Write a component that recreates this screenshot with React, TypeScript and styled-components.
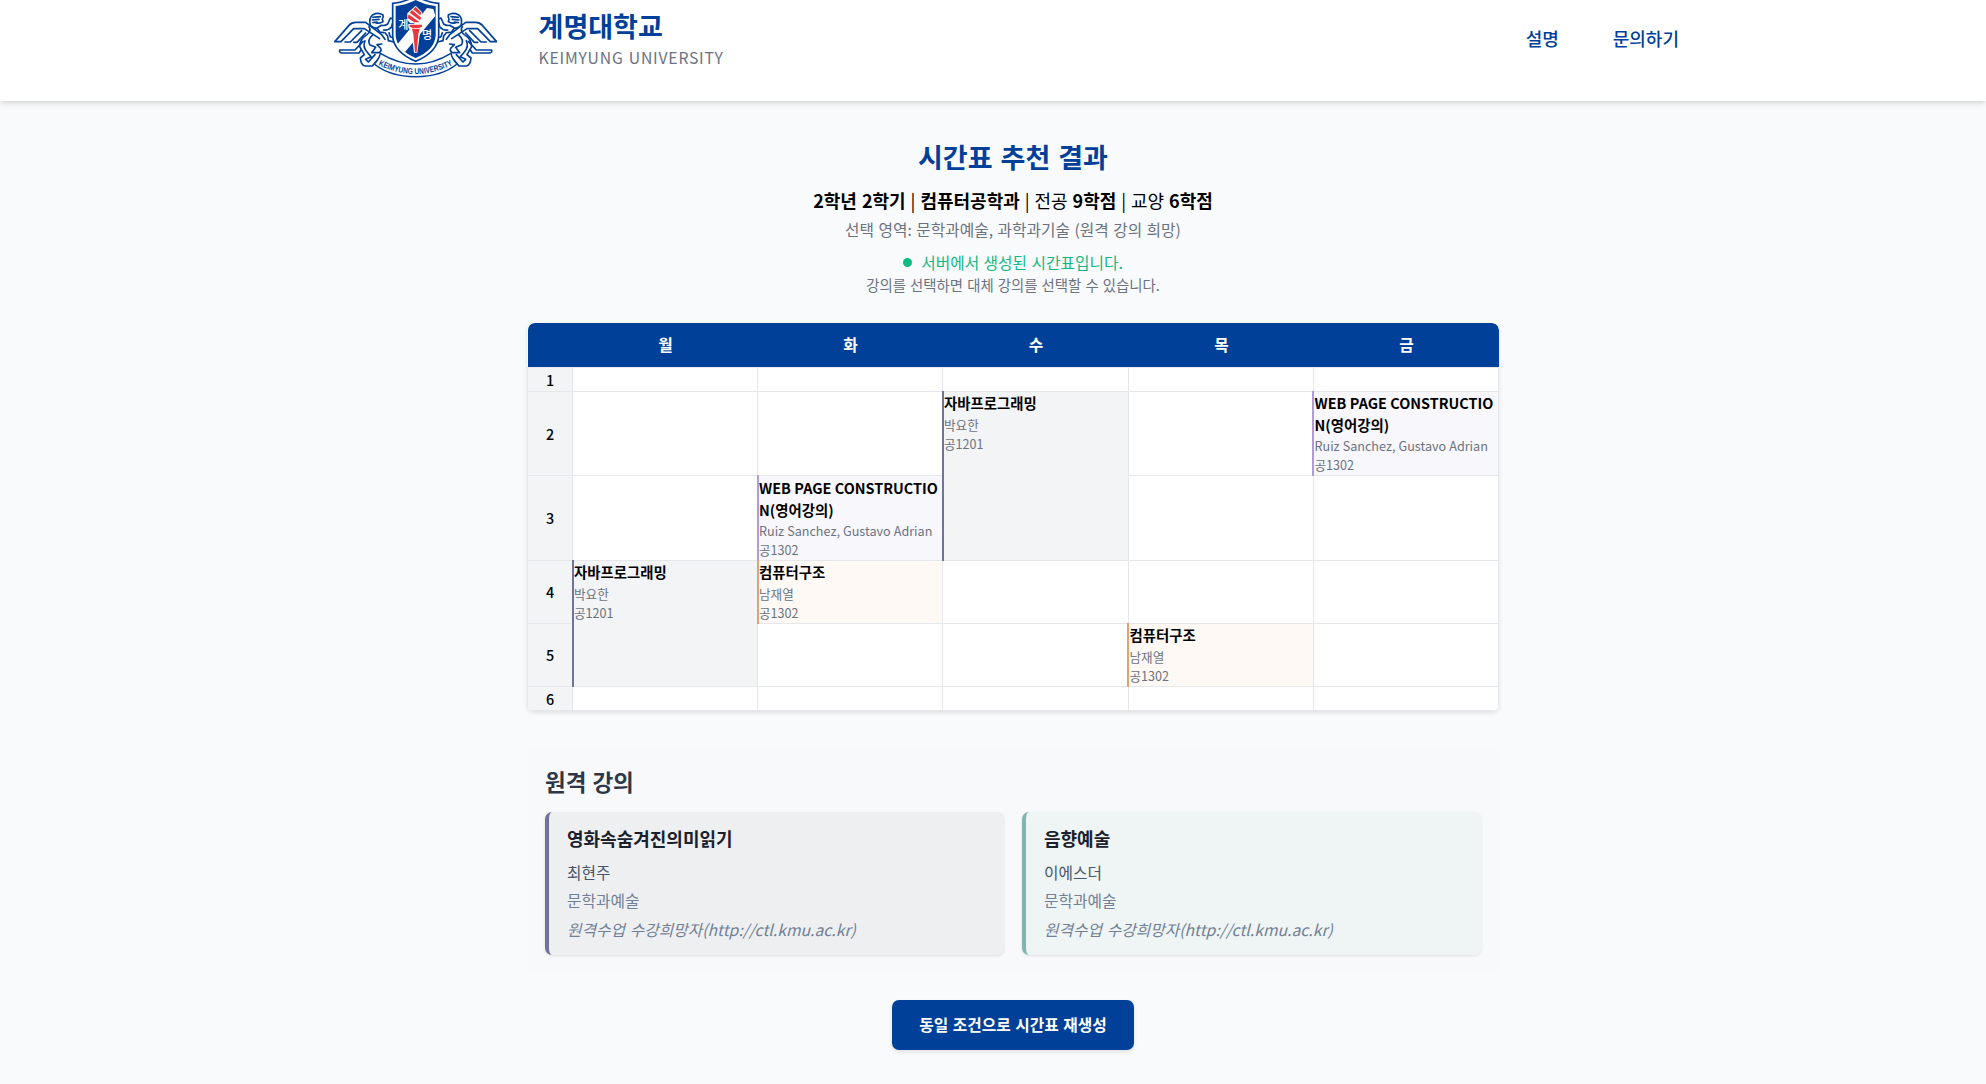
import React from "react";
import styled, { createGlobalStyle } from "styled-components";

const BLUE = "#004098";
const LINE = "#e5e7eb";

const GlobalStyle = createGlobalStyle`
  *, *::before, *::after { box-sizing: border-box; }
  html { font-size: 18px; }
  body {
    margin: 0;
    background: #f9fafc;
    color: #000;
    font-family: "Noto Sans CJK KR", "Noto Sans", sans-serif;
    word-spacing: 0.05em;
    overflow: hidden;
  }
  h1, h2, h3, p { margin: 0; }
`;

const Page = styled.div`
  min-height: 1084px;
`;

const Header = styled.header`
  display: flex;
  align-items: flex-start;
  height: 101px;
  padding: 0 307px 0 333px;
  background: #fff;
  box-shadow: 0 4px 6px -1px rgba(0, 0, 0, 0.1), 0 2px 4px -1px rgba(0, 0, 0, 0.06);
`;

const Crest = styled.svg`
  width: 165px;
  height: 80px;
  flex: none;
`;

const Brand = styled.div`
  display: flex;
  flex-direction: column;
  margin-left: 40.6px;
  padding-top: 6px;
`;

const BrandName = styled.strong`
  color: ${BLUE};
  font-size: 27px;
  font-weight: 700;
  line-height: 40px;
`;

const BrandLatin = styled.span`
  color: #6b7280;
  font-size: 15.75px;
  line-height: 23px;
  letter-spacing: 0.05em;
`;

const Nav = styled.nav`
  display: flex;
  gap: 54px;
  margin-left: auto;
  padding-top: 25px;
`;

const NavLink = styled.a`
  color: ${BLUE};
  font-size: 18px;
  font-weight: 500;
  line-height: 27px;
`;

const Main = styled.main`
  display: flex;
  flex-direction: column;
  align-items: center;
  width: 972px;
  margin-left: 527px;
  padding-top: 36px;
`;

const Title = styled.h1`
  color: ${BLUE};
  font-size: 27px;
  font-weight: 700;
  line-height: 40px;
  word-spacing: 0.07em;
`;

const Summary = styled.p`
  margin-top: 8px;
  font-size: 18px;
  line-height: 30px;
`;

const Selected = styled.p`
  margin-top: 3px;
  color: #6b7280;
  font-size: 15.75px;
  line-height: 24px;
`;

const Status = styled.p`
  display: flex;
  align-items: center;
  gap: 9px;
  margin-top: 9px;
  color: #10b981;
  font-size: 15.75px;
  line-height: 24px;
`;

const Dot = styled.span`
  width: 9px;
  height: 9px;
  border-radius: 50%;
  background: #10b981;
  transform: translateY(-1px);
`;

const Hint = styled.p`
  color: #6b7280;
  font-size: 14.4px;
  line-height: 20px;
`;

const Timetable = styled.div`
  width: 972px;
  margin-top: 28px;
  border-radius: 7px;
  overflow: hidden;
  box-shadow: 0 2px 4px rgba(0, 0, 0, 0.1);
`;

const columns = "45px 185px 185px 186px 185px 185px";

const DayRow = styled.div`
  display: grid;
  grid-template-columns: ${columns};
  height: 44px;
  margin-left: 1px;
  border-radius: 7px 7px 0 0;
  background: ${BLUE};
`;

const Day = styled.div`
  color: #fff;
  font-size: 15.75px;
  font-weight: 700;
  line-height: 43px;
  text-align: center;
`;

const Grid = styled.div`
  display: grid;
  grid-template-columns: ${columns};
  grid-template-rows: 24px 84px 85px 63px 63px 24px;
  border-top: 1px solid ${LINE};
  border-left: 1px solid ${LINE};
  background: #fff;
`;

const Cell = styled.div<{ $col: number; $row: number }>`
  grid-column: ${p => p.$col};
  grid-row: ${p => p.$row};
  border-right: 1px solid ${LINE};
  border-bottom: 1px solid ${LINE};
`;

const Period = styled(Cell)`
  display: flex;
  align-items: center;
  justify-content: center;
  background: #f3f4f6;
  font-size: 14.4px;
  font-weight: 500;
  line-height: 20px;
`;

const CourseCell = styled(Cell)<{ $span: number; $bg: string; $bar: string; $shift: number }>`
  grid-row: ${p => p.$row} / span ${p => p.$span};
  position: relative;
  padding-top: ${p => (p.$row === 3 ? 1 : 0)}px;
  padding-left: ${p => (p.$shift === 1 ? 1 : 0.5)}px;
  background: ${p => p.$bg};
  color: #6b7280;
  font-size: 12.6px;
  line-height: 18.9px;
  word-break: break-all;
  word-spacing: 0.02em;

  &::before {
    content: "";
    position: absolute;
    z-index: 1;
    top: -1px;
    bottom: -1px;
    left: -${p => p.$shift}px;
    width: 2px;
    background: ${p => p.$bar};
  }
`;

const CourseName = styled.div`
  margin-bottom: 2.2px;
  color: #000;
  font-size: 14.4px;
  font-weight: 700;
  line-height: 21.6px;
`;

const Remote = styled.section`
  width: 972px;
  margin-top: 36px;
  padding: 18px;
  border-radius: 9px;
  background: #f8f9fb;
`;

const RemoteTitle = styled.h2`
  margin-bottom: 14px;
  color: #2d3748;
  font-size: 22.5px;
  font-weight: 700;
  line-height: 33px;
`;

const RemoteList = styled.div`
  display: grid;
  grid-template-columns: 1fr 1fr;
  gap: 18px;
`;

const RemoteCard = styled.article<{ $bg: string; $bar: string }>`
  height: 143px;
  padding: 13px 18px 0;
  border-left: 4px solid ${p => p.$bar};
  border-radius: 7px;
  background: ${p => p.$bg};
  box-shadow: 0 1px 3px rgba(0, 0, 0, 0.1);
`;

const RemoteName = styled.h3`
  margin-bottom: 10px;
  color: #1a202c;
  font-size: 18px;
  font-weight: 700;
  line-height: 26px;
`;

const RemoteInfo = styled.p<{ $color: string; $italic?: boolean }>`
  margin-bottom: ${p => (p.$color === "#4a5568" ? 5 : 6)}px;
  color: ${p => p.$color};
  font-size: 15.75px;
  font-style: ${p => (p.$italic ? "italic" : "normal")};
  line-height: 23px;
  word-spacing: 0.08em;
`;

const Regenerate = styled.button`
  width: 242px;
  height: 50px;
  margin-top: 27px;
  padding: 0 0 1px;
  border: 0;
  border-radius: 7px;
  background: ${BLUE};
  color: #fff;
  font: 700 15.75px/48px "Noto Sans CJK KR", "Noto Sans", sans-serif;
  word-spacing: 0.065em;
  box-shadow: 0 2px 4px rgba(0, 0, 0, 0.1);
`;

const Griffin = () => (
  <g fill="none" stroke={BLUE} strokeWidth="5" strokeLinejoin="round" strokeLinecap="round">
    {/* wing */}
    <path d="M46 124 L88 76 Q96 67 108 67 H138 L186 104 L196 118" />
    <path d="M46 125 H64 L102 86 H134 L180 116" />
    <path d="M76 126 H92 L126 92 M102 127 H112 L138 99" />
    <path d="M60 150 H106 L130 124 M60 150 Q58 159 68 159 H118 L124 150" />
    {/* head and mane */}
    <path d="M152 76 Q146 54 160 44 Q176 36 190 45 Q192 52 188 57 L190 65 Q180 72 168 68 M152 76 Q160 86 172 84 L182 78 M160 52 L182 50 M158 60 L178 58 M160 68 L172 66 M172 84 L180 96 L192 98" />
    {/* forelegs reaching to the shield */}
    <path d="M184 76 Q196 78 204 72 L212 54 L222 58 L216 80 Q206 92 192 90 M196 98 L204 108 L206 122 L222 126 V114 L212 110 L208 98" />
    {/* body, haunch and tail */}
    <path d="M148 80 Q156 94 142 104 Q120 118 120 140 L134 164 L122 174 Q124 196 136 198 H158 L178 174" />
    <path d="M136 122 Q128 140 142 156 L154 170 L138 178 L146 186 L166 164 M160 104 Q142 120 150 134 L168 142 L156 158 H178 Q188 152 182 144 L172 134 L186 132" />
  </g>
);

const UniversityCrest = () => (
  <Crest viewBox="40 0 495 240" role="img" aria-label="Keimyung University">
    <Griffin />
    <g transform="translate(576 0) scale(-1 1)">
      <Griffin />
    </g>
    <path
      d="M288 -12 Q252 8 219 10 V108 Q222 156 288 184 Q354 156 357 108 V10 Q324 8 288 -12Z"
      fill="#fff"
      stroke={BLUE}
      strokeWidth="5"
    />
    <path d="M288 0 Q256 16 228 18 V108 Q232 150 288 174 Q344 150 348 108 V18 Q320 16 288 0Z" fill={BLUE} />
    <path d="M234 132 L322 24 Q332 26 341 27 L347 48 L256 156 Q240 146 234 132Z" fill="#fff" />
    <path
      d="M288 17 L307 36 V62 L303 70 H272 L263 60 V40Z M266 72 H311 V82 L301 98 L293 158 H283 L276 98 L266 82Z"
      fill="#fff"
    />
    <path d="M288 20 L305 38 L302 46 L280 28Z M277 30 L305 53 L301 61 L270 38Z M267 43 L300 67 H284 L264 54Z" fill="#e8383d" />
    <path d="M270 74 H307 V80 L298 84 H279 L270 80Z M277 86 H300 L296 102 L291 156 H286 L281 102Z" fill="#e8383d" />
    <text x="236" y="88" fill="#fff" fontSize="33" fontWeight="500">계</text>
    <text x="307" y="116" fill="#fff" fontSize="33" fontWeight="500">명</text>
    <path
      d="M182 160 Q288 224 394 160 Q398 178 412 192 Q366 230 288 230 Q210 230 164 192 Q178 178 182 160Z"
      fill="#fff"
      stroke={BLUE}
      strokeWidth="4.5"
      strokeLinejoin="round"
    />
    <path id="ribbon" d="M176 195 Q288 250 402 193" fill="none" />
    <text
      fill={BLUE}
      fontSize="25"
      fontWeight="700"
      fontFamily='"Liberation Sans Narrow", "Liberation Sans", sans-serif'
    >
      <textPath href="#ribbon" textLength="232" lengthAdjust="spacingAndGlyphs">
        KEIMYUNG UNIVERSITY
      </textPath>
    </text>
  </Crest>
);

type Course = { name: string; prof: string; room: string; col: number; row: number; span: number; bg: string; bar: string };

const java = { name: "자바프로그래밍", prof: "박요한", room: "공1201", span: 2, bg: "#f3f4f6", bar: "#70739a" };
const web = { name: "WEB PAGE CONSTRUCTION(영어강의)", prof: "Ruiz Sanchez, Gustavo Adrian", room: "공1302", span: 1, bg: "#f8f7fc", bar: "#b19cd9" };
const arch = { name: "컴퓨터구조", prof: "남재열", room: "공1302", span: 1, bg: "#fef9f5", bar: "#e0a370" };

const courses: Course[] = [
  { ...java, col: 4, row: 2 },
  { ...web, col: 6, row: 2 },
  { ...web, col: 3, row: 3 },
  { ...java, col: 2, row: 4 },
  { ...arch, col: 3, row: 4 },
  { ...arch, col: 5, row: 5 },
];

const days = ["월", "화", "수", "목", "금"];
const periods = [1, 2, 3, 4, 5, 6];

const isTaken = (col: number, row: number) =>
  courses.some(c => c.col === col && row >= c.row && row < c.row + c.span);

export default function App() {
  return (
    <Page>
      <GlobalStyle />
      <Header>
        <UniversityCrest />
        <Brand>
          <BrandName>계명대학교</BrandName>
          <BrandLatin>KEIMYUNG UNIVERSITY</BrandLatin>
        </Brand>
        <Nav>
          <NavLink>설명</NavLink>
          <NavLink>문의하기</NavLink>
        </Nav>
      </Header>
      <Main>
        <Title>시간표 추천 결과</Title>
        <Summary>
          <b>2학년 2학기</b> | <b>컴퓨터공학과</b> | 전공 <b>9학점</b> | 교양 <b>6학점</b>
        </Summary>
        <Selected>선택 영역: 문학과예술, 과학과기술 (원격 강의 희망)</Selected>
        <Status>
          <Dot />
          서버에서 생성된 시간표입니다.
        </Status>
        <Hint>강의를 선택하면 대체 강의를 선택할 수 있습니다.</Hint>

        <Timetable>
          <DayRow>
            <Day />
            {days.map(d => (
              <Day key={d}>{d}</Day>
            ))}
          </DayRow>
          <Grid>
            {periods.map(row => (
              <React.Fragment key={row}>
                <Period $col={1} $row={row}>{row}</Period>
                {days.map((d, i) =>
                  isTaken(i + 2, row) ? null : <Cell key={d} $col={i + 2} $row={row} />
                )}
              </React.Fragment>
            ))}
            {courses.map(c => (
              <CourseCell
                key={`${c.col}-${c.row}`}
                $col={c.col}
                $row={c.row}
                $span={c.span}
                $bg={c.bg}
                $bar={c.bar}
                $shift={c.col > 4 ? 2 : 1}
              >
                <CourseName>{c.name}</CourseName>
                <div>{c.prof}</div>
                <div>{c.room}</div>
              </CourseCell>
            ))}
          </Grid>
        </Timetable>

        <Remote>
          <RemoteTitle>원격 강의</RemoteTitle>
          <RemoteList>
            <RemoteCard $bg="#eeeff1" $bar="#70739a">
              <RemoteName>영화속숨겨진의미읽기</RemoteName>
              <RemoteInfo $color="#4a5568">최현주</RemoteInfo>
              <RemoteInfo $color="#718096">문학과예술</RemoteInfo>
              <RemoteInfo $color="#718096" $italic>원격수업 수강희망자(http://ctl.kmu.ac.kr)</RemoteInfo>
            </RemoteCard>
            <RemoteCard $bg="#eff4f4" $bar="#82b5b0">
              <RemoteName>음향예술</RemoteName>
              <RemoteInfo $color="#4a5568">이에스더</RemoteInfo>
              <RemoteInfo $color="#718096">문학과예술</RemoteInfo>
              <RemoteInfo $color="#718096" $italic>원격수업 수강희망자(http://ctl.kmu.ac.kr)</RemoteInfo>
            </RemoteCard>
          </RemoteList>
        </Remote>

        <Regenerate>동일 조건으로 시간표 재생성</Regenerate>
      </Main>
    </Page>
  );
}
